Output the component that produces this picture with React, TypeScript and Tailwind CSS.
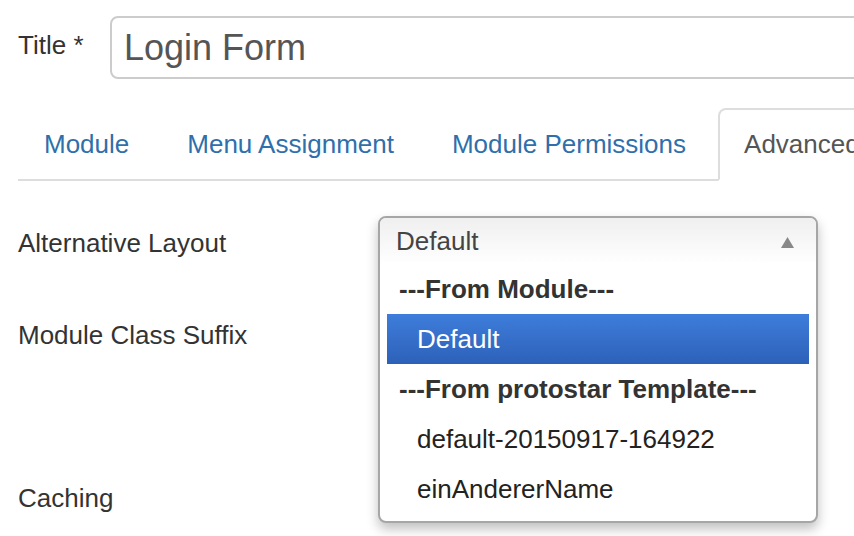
export default function App() {
  const tabs = ["Module", "Menu Assignment", "Module Permissions"];

  return (
    <div className="min-h-[536px] w-[854px] overflow-hidden bg-white pl-[18px] pt-4 font-['Liberation_Sans',Arial,sans-serif] text-[26px] leading-[36px] text-[#333]">
      {/* title row */}
      <div className="flex items-start">
        <label className="mt-[11px] w-[92px] shrink-0">Title *</label>
        <div className="h-[63px] w-[800px] shrink-0 rounded-[8px] border-2 border-[#ccc] pl-3 pt-[10px] text-[36px] leading-[40px] text-[#555]">
          Login Form
        </div>
      </div>

      {/* tabs */}
      <div className="mt-[29px] flex border-b-2 border-[#ddd]">
        {tabs.map((t) => (
          <div
            key={t}
            className="mr-[6px] -mb-[2px] shrink-0 whitespace-nowrap border-2 border-transparent px-6 pb-[17px] pt-4 text-[#2f6fab]"
          >
            {t}
          </div>
        ))}
        <div className="-mb-[2px] shrink-0 whitespace-nowrap rounded-t-[8px] border-2 border-[#ddd] border-b-white bg-white px-6 pb-[17px] pt-4 text-[#555]">
          Advanced
        </div>
      </div>

      {/* form rows */}
      <div className="relative flex">
        <div className="w-[361px] shrink-0">
          <div className="mt-[44px]">Alternative Layout</div>
          <div className="mt-[56px]">Module Class Suffix</div>
          <div className="mt-[127px]">Caching</div>
        </div>

        {/* open select */}
        <div className="relative">
          <div className="absolute -left-px top-[35px] z-10 w-[440px] overflow-hidden rounded-[8px] border-2 border-[#a6a6a6] bg-white pb-[7px] shadow-[0_6px_12px_rgba(0,0,0,0.25)]">
            <div className="flex h-[46px] items-start justify-between bg-gradient-to-b from-[#efefef] to-white pl-4 pr-[22px] pt-[5px] text-[#444]">
              <span>Default</span>
              <svg width="13" height="11" viewBox="0 0 13 11" className="mt-[14px]">
                <polygon points="6.5,0 13,11 0,11" fill="#888" />
              </svg>
            </div>
            <div className="px-[7px]">
              <div className="flex h-[50px] items-center pl-3 font-bold">---From Module---</div>
              <div className="flex h-[50px] items-center bg-gradient-to-b from-[#3e7ddb] to-[#2d61b8] pl-[30px] text-white">
                Default
              </div>
              <div className="flex h-[50px] items-center pl-3 font-bold">---From protostar Template---</div>
              <div className="flex h-[50px] items-center pl-[30px] text-[#222]">default-20150917-164922</div>
              <div className="flex h-[50px] items-center pl-[30px] text-[#222]">einAndererName</div>
            </div>
          </div>
        </div>
      </div>
    </div>
  );
}
